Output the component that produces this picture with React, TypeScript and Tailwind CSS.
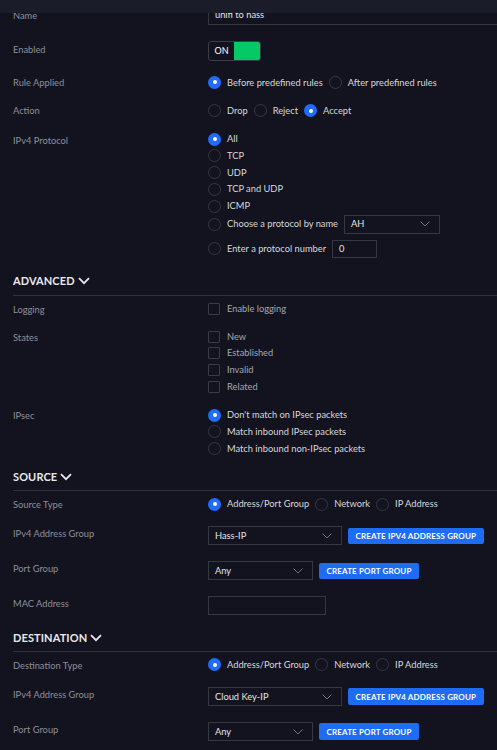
import React from "react";

const Radio = ({ on }: { on?: boolean }) =>
  on ? (
    <span className="flex h-[13px] w-[13px] shrink-0 items-center justify-center rounded-full bg-[#1f6cff]">
      <span className="h-[4px] w-[4px] rounded-full bg-white" />
    </span>
  ) : (
    <span className="h-[13px] w-[13px] shrink-0 rounded-full border border-[#363845]" />
  );

const Check = () => <span className="h-[12px] w-[12px] shrink-0 rounded-[1px] border border-[#393b47]" />;

const Chevron = () => (
  <svg width="10" height="6" viewBox="0 0 10 6" className="shrink-0">
    <path d="M0.5 0.5 L5 5 L9.5 0.5" fill="none" stroke="#6f717c" strokeWidth="1" />
  </svg>
);

const HeadChevron = () => (
  <svg width="12" height="8" viewBox="0 0 12 8" className="ml-[3px] shrink-0">
    <path d="M1 1.2 L6 6.2 L11 1.2" fill="none" stroke="#e6e7ea" strokeWidth="1.8" />
  </svg>
);

const Label = ({ children, cls }: { children: React.ReactNode; cls: string }) => (
  <div className={`w-[195px] shrink-0 text-[9.3px] leading-[12px] text-[#8d8f9a] ${cls}`}>{children}</div>
);

const ROpt = ({ on, children }: { on?: boolean; children: React.ReactNode }) => (
  <div className="flex h-[16.7px] items-center gap-[6px] text-[9.3px] text-[#d6d8dd]">
    <Radio on={on} />
    <span className="whitespace-nowrap">{children}</span>
  </div>
);

const COpt = ({ children }: { children: React.ReactNode }) => (
  <div className="flex h-[16.7px] items-center gap-[7px] text-[9.3px] text-[#a4a6ae]">
    <Check />
    <span className="whitespace-nowrap">{children}</span>
  </div>
);

const Select = ({ value, w }: { value: string; w: string }) => (
  <div className={`flex h-[19px] items-center justify-between border border-[#353743] pl-[6px] pr-[9px] text-[9.3px] text-[#e3e4e8] ${w}`}>
    <span className="whitespace-nowrap">{value}</span>
    <Chevron />
  </div>
);

const Btn = ({ children }: { children: React.ReactNode }) => (
  <div className="ml-[6px] flex h-[16.5px] items-center rounded-[2px] bg-[#1d6cf3] px-[7.5px] text-[8px] font-bold tracking-[0.15px] text-white whitespace-nowrap">
    {children}
  </div>
);

const Heading = ({ children, cls }: { children: React.ReactNode; cls: string }) => (
  <div className={`flex items-center border-b border-[#2f313c] pb-[6.5px] ${cls}`}>
    <span className="text-[11px] font-bold leading-[14px] tracking-[0.1px] text-[#e8e9ec]">{children}</span>
    <HeadChevron />
  </div>
);

export default function App() {
  return (
    <div className="relative h-[750px] w-[497px] overflow-hidden bg-[#13131f] font-['Lato','Noto_Sans',sans-serif]">
      <div className="absolute left-0 top-0 z-10 h-[13px] w-full bg-[#1b1c29]" />
      <div className="pl-[13px]">
        {/* Name */}
        <div className="mt-[5px] flex items-start">
          <Label cls="mt-[5px]">Name</Label>
          <div className="flex h-[20px] flex-1 items-center border border-r-0 border-[#353743] pl-[6px] text-[9.3px] text-[#e3e4e8]">
            unifi to hass
          </div>
        </div>
        {/* Enabled */}
        <div className="mt-[16px] flex items-start">
          <Label cls="mt-[2.5px]">Enabled</Label>
          <div className="flex h-[20px] w-[53px] items-stretch rounded-[3px] border border-[#3a3c48]">
            <div className="flex w-[25px] items-center justify-center text-[9px] text-white">ON</div>
            <div className="flex-1 rounded-r-[2px] bg-[#05c965]" />
          </div>
        </div>
        {/* Rule Applied */}
        <div className="mt-[13.15px] flex items-start">
          <Label cls="mt-[2.85px]">Rule Applied</Label>
          <div className="flex gap-[6px]">
            <ROpt on>Before predefined rules</ROpt>
            <ROpt>After predefined rules</ROpt>
          </div>
        </div>
        {/* Action */}
        <div className="mt-[11.8px] flex items-start">
          <Label cls="mt-[2.85px]">Action</Label>
          <div className="flex gap-[6px]">
            <ROpt>Drop</ROpt>
            <ROpt>Reject</ROpt>
            <ROpt on>Accept</ROpt>
          </div>
        </div>
        {/* IPv4 Protocol */}
        <div className="mt-[11.6px] flex items-start">
          <Label cls="mt-[3.75px]">IPv4 Protocol</Label>
          <div className="flex flex-col">
            <ROpt on>All</ROpt>
            <ROpt>TCP</ROpt>
            <ROpt>UDP</ROpt>
            <ROpt>TCP and UDP</ROpt>
            <ROpt>ICMP</ROpt>
            <div className="mt-[0.35px] flex h-[19px] items-center">
              <ROpt>Choose a protocol by name</ROpt>
              <div className="ml-[6px]">
                <Select value="AH" w="w-[96px]" />
              </div>
            </div>
            <div className="mt-[6.2px] flex h-[18px] items-center">
              <ROpt>Enter a protocol number</ROpt>
              <div className="ml-[6px] flex h-[18px] w-[45px] items-center border border-[#353743] pl-[6px] text-[9.3px] text-[#e3e4e8]">
                0
              </div>
            </div>
          </div>
        </div>

        <Heading cls="mt-[16.3px]">ADVANCED</Heading>
        {/* Logging */}
        <div className="mt-[4.85px] flex items-start">
          <Label cls="mt-[3.85px]">Logging</Label>
          <COpt>Enable logging</COpt>
        </div>
        {/* States */}
        <div className="mt-[11.1px] flex items-start">
          <Label cls="mt-[3.75px]">States</Label>
          <div className="flex flex-col">
            <COpt>New</COpt>
            <COpt>Established</COpt>
            <COpt>Invalid</COpt>
            <COpt>Related</COpt>
          </div>
        </div>
        {/* IPsec */}
        <div className="mt-[11.9px] flex items-start">
          <Label cls="mt-[3.35px]">IPsec</Label>
          <div className="flex flex-col">
            <ROpt on>Don't match on IPsec packets</ROpt>
            <ROpt>Match inbound IPsec packets</ROpt>
            <ROpt>Match inbound non-IPsec packets</ROpt>
          </div>
        </div>

        <Heading cls="mt-[12.8px]">SOURCE</Heading>
        <div className="mt-[4.8px] flex items-start">
          <Label cls="mt-[3.35px]">Source Type</Label>
          <div className="flex gap-[6px]">
            <ROpt on>Address/Port Group</ROpt>
            <ROpt>Network</ROpt>
            <ROpt>IP Address</ROpt>
          </div>
        </div>
        <div className="mt-[13.5px] flex items-start">
          <Label cls="mt-[1.7px]">IPv4 Address Group</Label>
          <div className="flex items-center">
            <Select value="Hass-IP" w="w-[134px]" />
            <Btn>CREATE IPV4 ADDRESS GROUP</Btn>
          </div>
        </div>
        <div className="mt-[16px] flex items-start">
          <Label cls="mt-[1.7px]">Port Group</Label>
          <div className="flex items-center">
            <Select value="Any" w="w-[105px]" />
            <Btn>CREATE PORT GROUP</Btn>
          </div>
        </div>
        <div className="mt-[16px] flex items-start">
          <Label cls="mt-[1.7px]">MAC Address</Label>
          <div className="h-[18.7px] w-[118px] border border-[#353743]" />
        </div>

        <Heading cls="mt-[15.8px]">DESTINATION</Heading>
        <div className="mt-[4.2px] flex items-start">
          <Label cls="mt-[3.35px]">Destination Type</Label>
          <div className="flex gap-[6px]">
            <ROpt on>Address/Port Group</ROpt>
            <ROpt>Network</ROpt>
            <ROpt>IP Address</ROpt>
          </div>
        </div>
        <div className="mt-[13.9px] flex items-start">
          <Label cls="mt-[1.7px]">IPv4 Address Group</Label>
          <div className="flex items-center">
            <Select value="Cloud Key-IP" w="w-[134px]" />
            <Btn>CREATE IPV4 ADDRESS GROUP</Btn>
          </div>
        </div>
        <div className="mt-[16px] flex items-start">
          <Label cls="mt-[1.7px]">Port Group</Label>
          <div className="flex items-center">
            <Select value="Any" w="w-[105px]" />
            <Btn>CREATE PORT GROUP</Btn>
          </div>
        </div>
      </div>
    </div>
  );
}
